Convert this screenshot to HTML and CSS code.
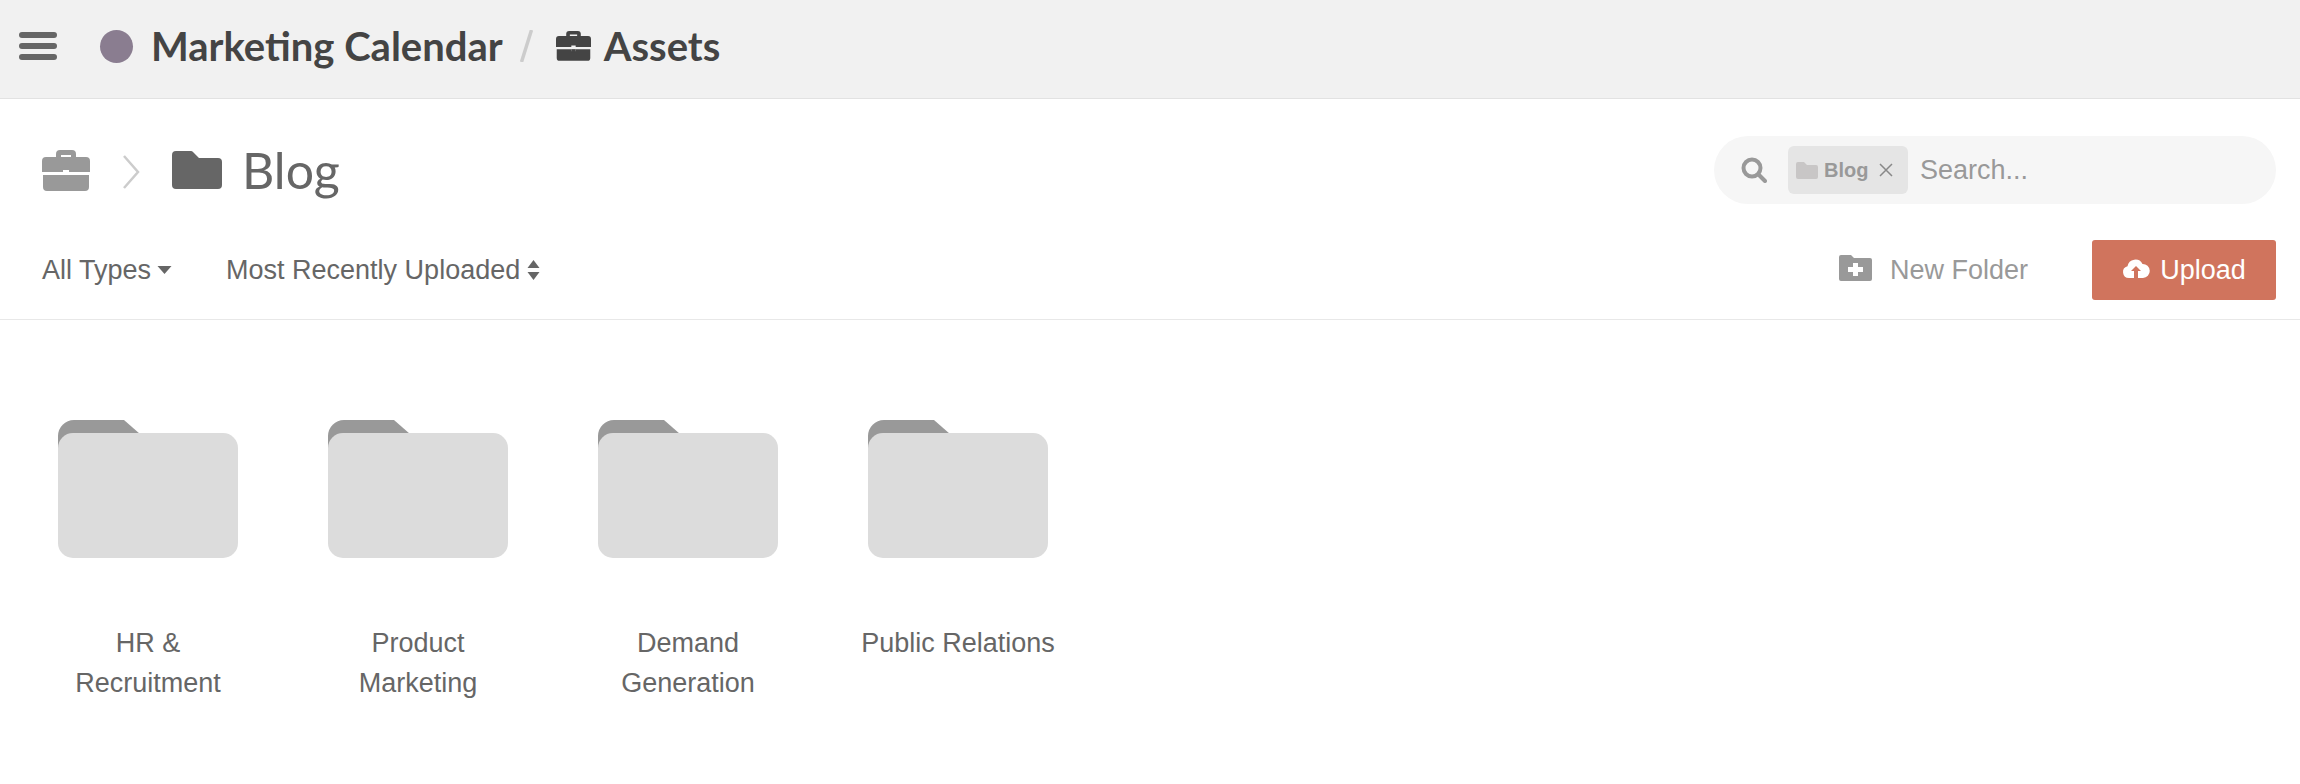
FILE: index.html
```html
<!DOCTYPE html>
<html lang="en">
<head>
    <meta charset="UTF-8">
    <title>Assets</title>
    <link rel="stylesheet" href="styles.css">
</head>
<body>
<div class="topbar">
    <svg class="menu" viewBox="0 0 38 28"><rect width="38" height="6" y="0" rx="3"/><rect width="38" height="6" y="11" rx="3"/><rect width="38" height="6" y="22" rx="3"/></svg>
    <span class="dot"></span>
    <span class="project">Marketing Calendar</span>
    <svg class="slash" viewBox="0 0 13 32"><path d="M11.5 0 L1.5 32"/></svg>
    <svg class="case case-top" viewBox="0 0 48 42"><use href="#briefcase"/></svg>
    <span class="project">Assets</span>
</div>
<div class="toolbar">
    <div class="row-title">
        <div class="crumbs">
            <svg class="case case-crumb" viewBox="0 0 48 42">
                <defs>
                    <g id="briefcase">
                        <path d="M14 8V5a4 4 0 0 1 4-4h12a4 4 0 0 1 4 4v3h-5V6H19v2z"/>
                        <path d="M4 8h40a4 4 0 0 1 4 4v11H27v-2h-6v2H0V12a4 4 0 0 1 4-4z"/>
                        <path d="M1 26h20v3h-1.500v0h9v0H27v-3h20v12a4 4 0 0 1-4 4H5a4 4 0 0 1-4-4z"/>
                        <path d="M21 26h6v5h-6z"/>
                    </g>
                </defs>
                <use href="#briefcase"/>
            </svg>
            <svg class="chev" viewBox="0 0 18 36"><path d="M2 2 L16 18 L2 34"/></svg>
            <svg class="folder-crumb" viewBox="0 0 50 38"><path d="M4 0h15a3 3 0 0 1 2 1l6 6h19a4 4 0 0 1 4 4v23a4 4 0 0 1-4 4H4a4 4 0 0 1-4-4V4a4 4 0 0 1 4-4z"/></svg>
            <h1 class="blog">Blog</h1>
        </div>
        <div class="search">
            <svg class="mag" viewBox="0 0 26 26"><circle cx="11" cy="11" r="8.500"/><path d="M17.500 17.500 L24 24"/></svg>
            <span class="chip">
                <svg class="chip-folder" viewBox="0 0 22 17"><path d="M2 0h6l3 3h9a2 2 0 0 1 2 2v10a2 2 0 0 1-2 2H2a2 2 0 0 1-2-2V2a2 2 0 0 1 2-2z"/></svg>
                <span class="chip-text">Blog</span>
                <svg class="chip-x" viewBox="0 0 14 14"><path d="M1 1 L13 13 M13 1 L1 13"/></svg>
            </span>
            <span class="placeholder">Search...</span>
        </div>
    </div>
    <div class="row-filters">
        <span class="filter">All Types<svg class="caret" viewBox="0 0 14 8"><path d="M0 0h14L7 8z"/></svg></span>
        <span class="filter">Most Recently Uploaded<svg class="updown" viewBox="0 0 12 20"><path d="M6 0l6 8H0zM6 20L0 12h12z"/></svg></span>
        <span class="spacer"></span>
        <span class="new-folder">
            <svg class="plus-folder" viewBox="0 0 33 26"><path d="M2 0h10l3 3h16a2 2 0 0 1 2 2v19a2 2 0 0 1-2 2H2a2 2 0 0 1-2-2V2a2 2 0 0 1 2-2z"/><path class="plus" d="M14 8h5v4h5v5h-5v4h-5v-4H9v-5h5z"/></svg>
            New Folder
        </span>
        <button class="upload">
            <svg class="cloud" viewBox="0 0 28 22"><path d="M7 21a6 6 0 0 1-1.500-11.800A8 8 0 0 1 20.500 7 7 7 0 0 1 21 21h-5v-7h3l-5-5-5 5h3v7z"/></svg>
            Upload
        </button>
    </div>
</div>
<div class="grid">
    <div class="item">
        <div class="folder"><div class="folder-tab"></div><div class="folder-front"></div></div>
        <div class="label">HR &amp; Recruitment</div>
    </div>
    <div class="item">
        <div class="folder"><div class="folder-tab"></div><div class="folder-front"></div></div>
        <div class="label">Product Marketing</div>
    </div>
    <div class="item">
        <div class="folder"><div class="folder-tab"></div><div class="folder-front"></div></div>
        <div class="label">Demand Generation</div>
    </div>
    <div class="item">
        <div class="folder"><div class="folder-tab"></div><div class="folder-front"></div></div>
        <div class="label">Public Relations</div>
    </div>
</div>
</body>
</html>
```

FILE: styles.css
```css
* {
    padding: 0;
    margin: 0;
    box-sizing: border-box;
}

body {
    background: #fff;
    color: #666;
    font-family: "Liberation Sans", Arial, sans-serif;
    font-size: 27px;
}

.topbar {
    display: flex;
    align-items: center;
    height: 99px;
    padding: 0 0 6px 19px;
    background: #f1f1f1;
    border-bottom: 1px solid #e2e2e2;
}

.menu {
    width: 38px;
    height: 28px;
    fill: #666;
}

.dot {
    width: 33px;
    height: 33px;
    margin-left: 43px;
    border-radius: 50%;
    background: #8a7d90;
}

.project {
    margin-left: 18px;
    font-family: Lato, sans-serif;
    font-size: 40px;
    font-weight: 700;
    color: #444;
}

.slash {
    width: 13px;
    height: 32px;
    margin-left: 17px;
    fill: none;
    stroke: #ccc;
    stroke-width: 3.500;
}

.case {
    display: block;
}

.case-top {
    width: 35px;
    height: 31px;
    margin: -2px -5px 0 23px;
    fill: #444;
}

.toolbar {
    height: 221px;
    padding: 37px 24px 0 42px;
    border-bottom: 1px solid #e8e8e8;
}

.row-title {
    display: flex;
    justify-content: space-between;
    align-items: center;
    height: 68px;
}

.crumbs {
    display: flex;
    align-items: center;
}

.case-crumb {
    width: 48px;
    height: 42px;
    fill: #999;
}

.chev {
    width: 18px;
    height: 36px;
    margin: 4px 32px 0 32px;
    fill: none;
    stroke: #ccc;
    stroke-width: 2.500;
}

.folder-crumb {
    width: 50px;
    height: 38px;
    fill: #666;
}

.blog {
    margin: 0 0 0 20px;
    font-family: Lato, sans-serif;
    font-size: 50px;
    font-weight: 400;
    color: #666;
}

.search {
    display: flex;
    align-items: center;
    width: 562px;
    height: 68px;
    padding-left: 27px;
    border-radius: 34px;
    background: #f6f6f6;
}

.mag {
    width: 26px;
    height: 26px;
    fill: none;
    stroke: #999;
    stroke-width: 4;
    stroke-linecap: round;
}

.chip {
    display: flex;
    align-items: center;
    width: 120px;
    height: 48px;
    margin-left: 21px;
    padding-left: 8px;
    border-radius: 6px;
    background: #e5e5e5;
}

.chip-folder {
    width: 22px;
    height: 17px;
    fill: #c8c6c6;
}

.chip-text {
    margin-left: 6px;
    font-size: 20px;
    font-weight: 700;
    color: #999;
}

.chip-x {
    width: 14px;
    height: 14px;
    margin-left: 11px;
    fill: none;
    stroke: #888;
    stroke-width: 1.500;
}

.placeholder {
    margin-left: 12px;
    color: #999;
}

.row-filters {
    display: flex;
    align-items: center;
    height: 60px;
    margin-top: 36px;
}

.filter {
    display: flex;
    align-items: center;
    margin-right: 54px;
}

.caret {
    width: 15px;
    height: 8px;
    margin-left: 6px;
    fill: #666;
}

.updown {
    width: 13px;
    height: 20px;
    margin-left: 7px;
    fill: #666;
}

.spacer {
    flex: 1;
}

.new-folder {
    display: flex;
    align-items: center;
    color: #999;
    margin-right: 64px;
}

.plus-folder {
    width: 33px;
    height: 26px;
    margin: -4px 18px 0 0;
    fill: #999;
}

.plus {
    fill: #fff;
}

.upload {
    display: flex;
    align-items: center;
    justify-content: center;
    width: 184px;
    height: 60px;
    border: 0;
    border-radius: 3px;
    background: #d0745d;
    color: #fff;
    font-family: "Liberation Sans", Arial, sans-serif;
    font-size: 27px;
}

.cloud {
    width: 28px;
    height: 22px;
    margin: -5px 10px 0 0;
    fill: #fff;
}

.grid {
    display: flex;
    padding: 100px 0 0 28px;
}

.item {
    width: 240px;
    margin-right: 30px;
    text-align: center;
}

.folder {
    position: relative;
    width: 180px;
    height: 138px;
    margin: 0 auto;
}

.folder-tab {
    position: absolute;
    left: 0;
    top: 0;
    width: 82px;
    height: 30px;
    border-radius: 16px 6px 0 0;
    background: #999;
    clip-path: polygon(0 0, 66px 0, 82px 14px, 82px 100%, 0 100%);
}

.folder-front {
    position: absolute;
    left: 0;
    top: 13px;
    width: 180px;
    height: 125px;
    border-radius: 15px;
    background: #dcdcdc;
}

.label {
    width: 180px;
    margin: 65px auto 0;
    line-height: 40px;
}

.item:last-child .label {
    width: auto;
}
```
